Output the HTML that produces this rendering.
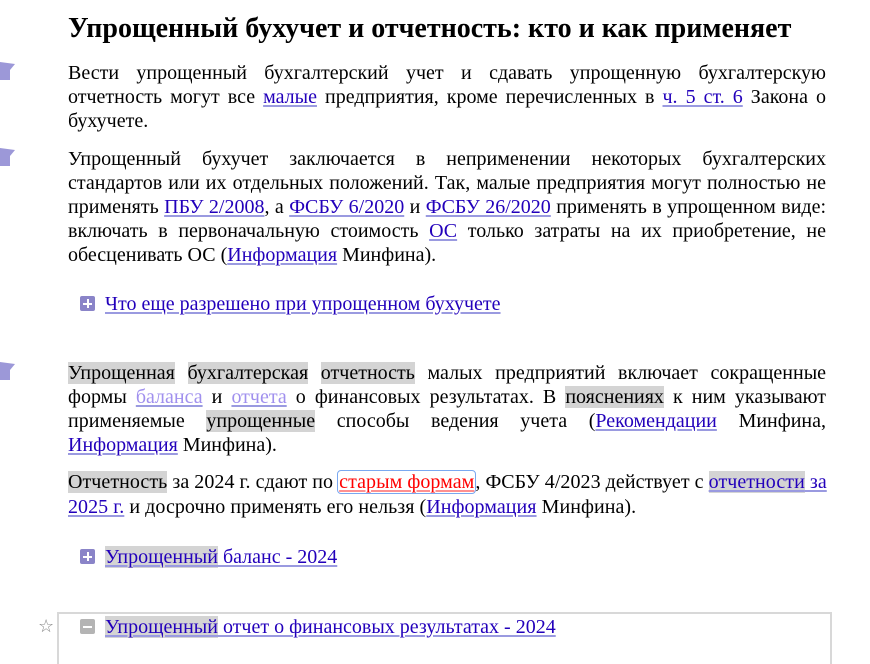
<!DOCTYPE html>
<html><head><meta charset="utf-8"><style>
body{margin:0;width:870px;height:650px;overflow:hidden;background:#fff;font-family:"Liberation Serif",serif;color:#000;position:relative}
h1{position:absolute;left:68px;top:11px;margin:0;font-size:28px;font-weight:bold;line-height:36px;white-space:nowrap}
.p{position:absolute;left:68px;width:758px;font-size:20px;line-height:24px;text-align:justify;margin:0}
a{color:#2200bb;text-decoration:underline;text-decoration-color:#9a9ae0;text-underline-offset:2px}
.h{background:#d4d4d4}
.lt{color:#a090ee}
.flag{position:absolute;left:0;width:24px;height:26px}
.row{position:absolute;left:80px;font-size:20px;line-height:24px;white-space:nowrap}
.bx{display:inline-block;width:15px;height:15px;background:#8a84c8;border-radius:2px;vertical-align:-1px;margin-right:10px;position:relative}
.bx:before{content:"";position:absolute;left:3px;top:6.5px;width:9px;height:2px;background:#fff}
.bx.p2:after{content:"";position:absolute;left:6.5px;top:3px;width:2px;height:9px;background:#fff}
.bx.g{background:#b4b4b4}
.red{color:#ff0000;text-decoration-color:#ff9090}
.frm{outline:1.5px solid #7aa8f0;border-radius:3px;padding:0 1px}
.cond{letter-spacing:0.05px;text-align:left}
</style></head><body>
<h1>Упрощенный бухучет и отчетность: кто и как применяет</h1>
<svg class="flag" style="top:58px" viewBox="0 0 24 26"><path d="M0 4 L15 6 L10 12 L10 22 L0 22Z" fill="#9c98d8"/></svg>
<svg class="flag" style="top:144px" viewBox="0 0 24 26"><path d="M0 4 L15 6 L10 12 L10 22 L0 22Z" fill="#9c98d8"/></svg>
<svg class="flag" style="top:358px" viewBox="0 0 24 26"><path d="M0 4 L15 6 L10 12 L10 22 L0 22Z" fill="#9c98d8"/></svg>
<p class="p" style="top:61px">Вести упрощенный бухгалтерский учет и сдавать упрощенную бухгалтерскую отчетность могут все <a>малые</a> предприятия, кроме перечисленных в <a>ч. 5 ст. 6</a> Закона о бухучете.</p>
<p class="p" style="top:147px">Упрощенный бухучет заключается в неприменении некоторых бухгалтерских стандартов или их отдельных положений. Так, малые предприятия могут полностью не применять <a>ПБУ 2/2008</a>, а <a>ФСБУ 6/2020</a> и <a>ФСБУ 26/2020</a> применять в упрощенном виде: включать в первоначальную стоимость <a>ОС</a> только затраты на их приобретение, не обесценивать ОС (<a>Информация</a> Минфина).</p>
<div class="row" style="top:292px"><span class="bx p2"></span><a>Что еще разрешено при упрощенном бухучете</a></div>
<p class="p" style="top:361px"><span class="h">Упрощенная</span> <span class="h">бухгалтерская</span> <span class="h">отчетность</span> малых предприятий включает сокращенные формы <a class="lt">баланса</a> и <a class="lt">отчета</a> о финансовых результатах. В <span class="h">пояснениях</span> к ним указывают применяемые <span class="h">упрощенные</span> способы ведения учета (<a>Рекомендации</a> Минфина, <a>Информация</a> Минфина).</p>
<p class="p cond" style="top:470px;line-height:25px;white-space:nowrap"><span class="h">Отчетность</span> за 2024 г. сдают по <a class="red frm">старым формам</a>, ФСБУ 4/2023 действует с <a><span class="h">отчетности</span> за<br>2025 г.</a> и досрочно применять его нельзя (<a>Информация</a> Минфина).</p>
<div class="row" style="top:545px"><span class="bx p2"></span><a><span class="h">Упрощенный</span> баланс - 2024</a></div>
<div style="position:absolute;left:57px;top:612px;width:771px;height:50px;border:2px solid #d8d8d8;border-bottom:none"></div>
<div style="position:absolute;left:38px;top:616px;font-size:18px;color:#888;font-family:'DejaVu Sans',sans-serif">☆</div>
<div class="row" style="top:615px"><span class="bx g"></span><a><span class="h">Упрощенный</span> отчет о финансовых результатах - 2024</a></div>
</body></html>
